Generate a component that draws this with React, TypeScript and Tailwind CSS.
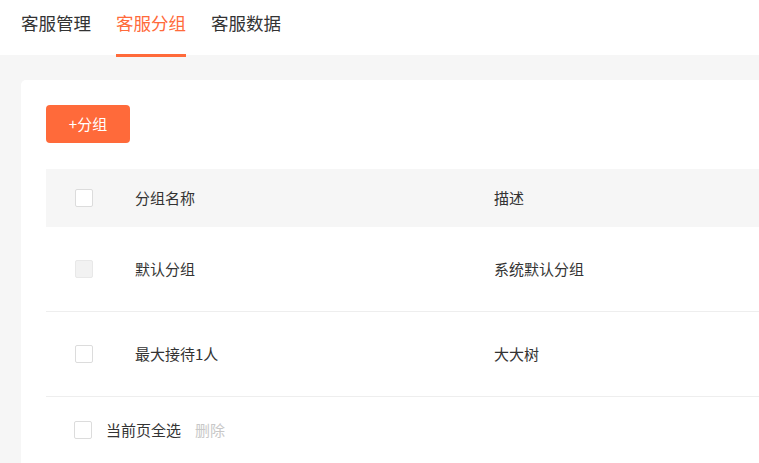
import React from "react";

const font = { fontFamily: '"Noto Sans CJK SC", "Noto Sans", sans-serif' };

function Checkbox({ disabled = false }: { disabled?: boolean }) {
  return (
    <span
      className={
        "block w-[18px] h-[18px] rounded-[2px] border " +
        (disabled ? "bg-[#f2f2f2] border-[#e8e8e8]" : "bg-white border-[#dcdcdc]")
      }
    />
  );
}

const rows = [
  { name: "默认分组", desc: "系统默认分组", disabled: true },
  { name: "最大接待1人", desc: "大大树", disabled: false },
];

export default function App() {
  return (
    <div className="min-h-[463px] bg-[#f6f6f6] text-[#333]" style={font}>
      <div className="h-[55px] bg-white flex items-start pl-[21px] gap-[25px]">
        <div className="h-[55px] flex items-center text-[17.5px] leading-none pb-[10px]">客服管理</div>
        <div className="relative h-[55px] flex items-center text-[17.5px] leading-none pb-[10px] text-[#ff6a3a]">
          客服分组
          <span className="absolute left-0 right-0 top-[54px] h-[3px] bg-[#ff6a3a]" />
        </div>
        <div className="h-[55px] flex items-center text-[17.5px] leading-none pb-[10px]">客服数据</div>
      </div>
      <div className="pt-[25px] pl-[21px]">
        <div className="bg-white rounded-l-[5px] pl-[25px] pt-[25px] min-h-[400px]">
          <button className="w-[84px] h-[38px] rounded-[4px] bg-[#ff6a3a] text-white text-[15px] leading-none pb-[2px]">
            +分组
          </button>
          <div className="mt-[26px] text-[15px]">
            <div className="h-[58px] bg-[#f6f6f6] flex items-center">
              <div className="w-[89px] pl-[29px]">
                <Checkbox />
              </div>
              <div className="w-[359px]">分组名称</div>
              <div>描述</div>
            </div>
            {rows.map((r) => (
              <div key={r.name} className="h-[85px] border-b border-[#eeeeee] flex items-center">
                <div className="w-[89px] pl-[29px]">
                  <Checkbox disabled={r.disabled} />
                </div>
                <div className="w-[359px]">{r.name}</div>
                <div>{r.desc}</div>
              </div>
            ))}
            <div className="h-[68px] flex items-center pl-[28px] pb-[2px]">
              <Checkbox />
              <span className="ml-[14px]">当前页全选</span>
              <span className="ml-[14px] text-[#c8c8c8]">删除</span>
            </div>
          </div>
        </div>
      </div>
    </div>
  );
}
